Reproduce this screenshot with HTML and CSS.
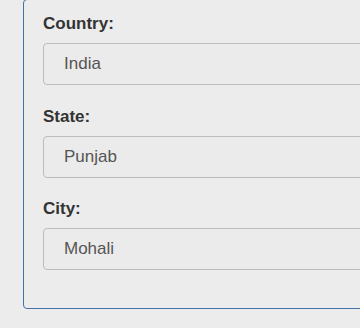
FILE: index.html
```html
<!DOCTYPE html>
<html lang="en">
<head>
    <meta charset="UTF-8">
    <meta name="viewport" content="width=device-width, initial-scale=1.0">
    <title>Location Form</title>
    <link rel="stylesheet" href="styles.css">
</head>
<body>
    <fieldset class="location-box">
        <div class="field">
            <label for="country">Country:</label>
            <input type="text" id="country" value="India">
        </div>
        <div class="field">
            <label for="state">State:</label>
            <input type="text" id="state" value="Punjab">
        </div>
        <div class="field">
            <label for="city">City:</label>
            <input type="text" id="city" value="Mohali">
        </div>
    </fieldset>
</body>
</html>
```

FILE: styles.css
```css
body {
    margin: 0;
    background-color: #ececec;
    font-family: "Liberation Sans", Arial, sans-serif;
    overflow: hidden;
}
.location-box {
    margin: -1px 0 0 23px;
    width: 420px;
    padding: 13px 19px 38px;
    border: 1px solid #4372aa;
    border-radius: 4px;
    box-sizing: border-box;
}
.field {
    display: flex;
    flex-direction: column;
    margin-bottom: 20.5px;
}
.field:last-child {
    margin-bottom: 0;
}
label {
    font-size: 17px;
    line-height: 22px;
    font-weight: bold;
    color: #333;
    margin-bottom: 8px;
}
input {
    height: 42px;
    box-sizing: border-box;
    padding: 0 20px;
    border: 1px solid #bcbcbc;
    border-radius: 4px;
    background-color: #ebebeb;
    font-family: "Liberation Sans", Arial, sans-serif;
    font-size: 17px;
    color: #555;
}
```
